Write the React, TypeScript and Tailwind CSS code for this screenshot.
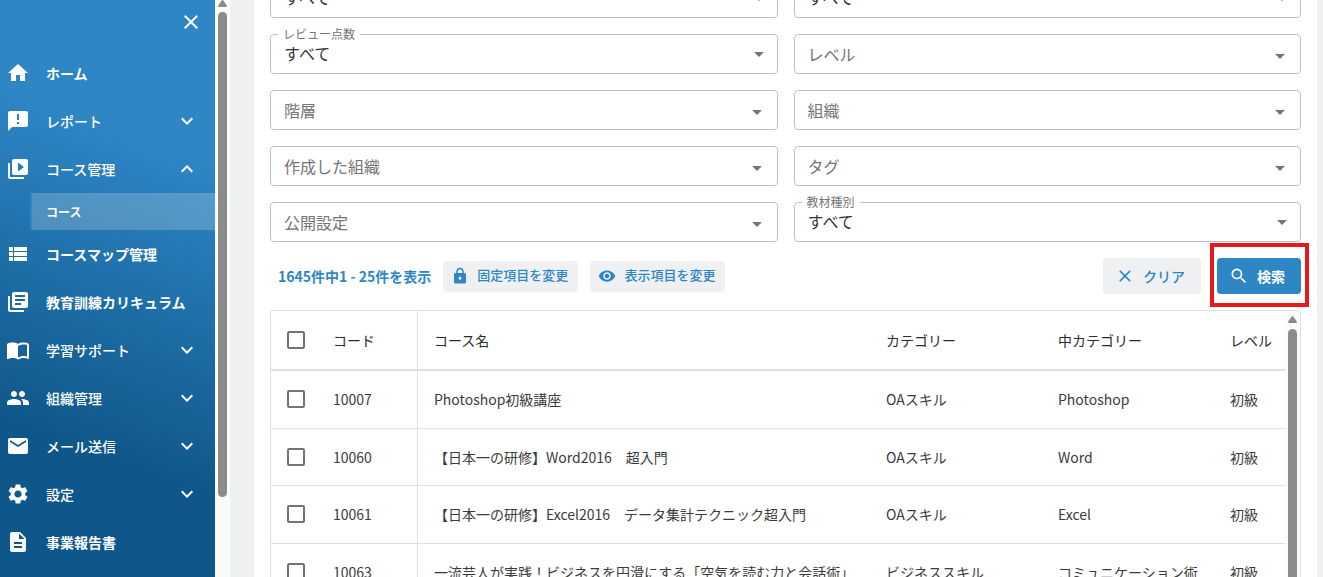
import React, { useState } from "react";
import clsx from "clsx";
import {
  MdAnnouncement,
  MdArrowDropDown,
  MdClose,
  MdDescription,
  MdEmail,
  MdExpandLess,
  MdExpandMore,
  MdHome,
  MdImportContacts,
  MdLibraryBooks,
  MdLock,
  MdPeople,
  MdSearch,
  MdSettings,
  MdVideoLibrary,
  MdViewList,
  MdVisibility,
} from "react-icons/md";

const menu = [
  { label: "ホーム", icon: MdHome },
  { label: "レポート", icon: MdAnnouncement, expandable: true },
  { label: "コース管理", icon: MdVideoLibrary, expandable: true, children: ["コース"] },
  { label: "コースマップ管理", icon: MdViewList },
  { label: "教育訓練カリキュラム", icon: MdLibraryBooks },
  { label: "学習サポート", icon: MdImportContacts, expandable: true },
  { label: "組織管理", icon: MdPeople, expandable: true },
  { label: "メール送信", icon: MdEmail, expandable: true },
  { label: "設定", icon: MdSettings, expandable: true },
  { label: "事業報告書", icon: MdDescription },
];

interface Filter {
  id: string;
  label?: string;
  value: string;
}

const filters: Filter[] = [
  { id: "category", value: "すべて" },
  { id: "subcategory", value: "すべて" },
  { id: "review", label: "レビュー点数", value: "すべて" },
  { id: "level", value: "レベル" },
  { id: "rank", value: "階層" },
  { id: "organization", value: "組織" },
  { id: "owner", value: "作成した組織" },
  { id: "tag", value: "タグ" },
  { id: "publish", value: "公開設定" },
  { id: "material", label: "教材種別", value: "すべて" },
];

const courses = [
  { code: "10007", name: "Photoshop初級講座", category: "OAスキル", sub: "Photoshop", level: "初級" },
  { code: "10060", name: "【日本一の研修】Word2016　超入門", category: "OAスキル", sub: "Word", level: "初級" },
  { code: "10061", name: "【日本一の研修】Excel2016　データ集計テクニック超入門", category: "OAスキル", sub: "Excel", level: "初級" },
  { code: "10063", name: "一流芸人が実践！ビジネスを円滑にする「空気を読む力と会話術」", category: "ビジネススキル", sub: "コミュニケーション術", level: "初級" },
];

function ScrollArrow() {
  return (
    <svg viewBox="0 0 9 7" className="w-[9px] h-[7px] shrink-0 fill-[#8b8b8b]">
      <path d="M3.7.5a1 1 0 0 1 1.6 0L8.8 5.6A.9.9 0 0 1 8 7H1A.9.9 0 0 1 .2 5.6z" />
    </svg>
  );
}

function Sidebar() {
  return (
    <nav className="w-[215px] shrink-0 overflow-hidden text-white bg-[linear-gradient(200deg,#2e86c5_25%,#0f578a_76%)]">
      <div className="flex h-[49px] items-start justify-end pt-[10px] pr-3">
        <button aria-label="メニューを閉じる">
          <MdClose className="size-6" />
        </button>
      </div>
      {menu.map(({ label, icon: Icon, expandable, children }) => (
        <div key={label}>
          <a
            href="#"
            className={clsx(
              "flex h-12 items-center pl-[6px] pr-4 text-sm",
              expandable ? "font-medium" : "font-bold"
            )}
          >
            <Icon className="mr-4 size-6 shrink-0" />
            <span className="flex-1 whitespace-nowrap">{label}</span>
            {expandable && (children ? <MdExpandLess className="size-6" /> : <MdExpandMore className="size-6" />)}
          </a>
          {children?.map((child) => (
            <a
              key={child}
              href="#"
              className="ml-[30px] flex h-[37px] items-center border-l-2 border-[#2e86c5] bg-white/20 bg-clip-padding pl-[14px] text-xs font-bold"
            >
              {child}
            </a>
          ))}
        </div>
      ))}
    </nav>
  );
}

function FilterSelect({ id, label, value }: Filter) {
  const filled = value === "すべて";

  return (
    <div className="relative h-10">
      {label && (
        <label htmlFor={id} className="absolute left-2 -top-2 bg-white px-[5px] text-xs leading-4 text-[#757575]">
          {label}
        </label>
      )}
      <select
        id={id}
        aria-label={label ? undefined : value}
        className={clsx(
          "h-full w-full appearance-none rounded border border-[#c0c0c0] bg-transparent px-[13px] text-base outline-none",
          filled ? "pb-[2px] text-[#333]" : "text-[#757575]"
        )}
      >
        <option>{value}</option>
      </select>
      <MdArrowDropDown
        className={clsx(
          "pointer-events-none absolute size-6 text-[#757575]",
          filled ? "right-[7px] top-2" : "right-[9px] top-[10px]"
        )}
      />
    </div>
  );
}

function Checkbox({ label, checked, onChange }: { label: string; checked: boolean; onChange: () => void }) {
  return (
    <input
      type="checkbox"
      aria-label={label}
      checked={checked}
      onChange={onChange}
      className="block size-[18px] appearance-none rounded-[2px] border-2 border-[#757575] checked:bg-[#2e86c5]"
    />
  );
}

export default function App() {
  const [selected, setSelected] = useState<string[]>([]);

  const toggle = (code: string) =>
    setSelected((prev) => (prev.includes(code) ? prev.filter((c) => c !== code) : [...prev, code]));

  const allSelected = selected.length === courses.length;

  return (
    <div
      lang="ja"
      className="flex h-screen overflow-hidden bg-[#eff0f2] font-['Noto_Sans_CJK_JP',sans-serif]"
    >
      <Sidebar />
      {/* Sidebar scrollbar */}
      <div className="flex w-[15px] shrink-0 flex-col items-center gap-[5px] bg-[#fbfbfb]">
        <ScrollArrow />
        <div className="h-[84%] w-[9px] rounded-full bg-[#8b8b8b]" />
      </div>

      <main className="ml-6 mr-[6px] flex min-w-0 flex-1 flex-col overflow-hidden bg-white px-4">
        {/* Search filters */}
        <div className="-mt-[22px] grid shrink-0 grid-cols-2 gap-4">
          {filters.map((filter) => (
            <FilterSelect key={filter.id} {...filter} />
          ))}
        </div>

        {/* Toolbar */}
        <div className="flex h-[68px] shrink-0 items-center text-sm text-[#2e86c5]">
          <p className="mr-3 pl-2 font-bold">1645件中1 - 25件を表示</p>
          <button className="mr-3 flex h-[31px] items-center gap-2 rounded bg-[#eff0f2] pb-px pl-2 pr-[10px] text-[13px] font-medium">
            <MdLock className="size-[18px]" />
            固定項目を変更
          </button>
          <button className="flex h-[31px] items-center gap-2 rounded bg-[#eff0f2] pb-px pl-2 pr-[10px] text-[13px] font-medium">
            <MdVisibility className="size-[18px]" />
            表示項目を変更
          </button>
          <button className="ml-auto mr-4 flex h-9 items-center gap-2 rounded bg-[#eff0f2] pl-3 pr-4 font-medium">
            <MdClose className="size-5" />
            クリア
          </button>
          <div className="relative">
            <button className="flex h-9 items-center gap-2 rounded bg-[#2e86c5] pl-3 pr-4 font-bold text-white">
              <MdSearch className="size-5" />
              検索
            </button>
            <div className="pointer-events-none absolute -left-[7px] -right-2 -top-[15px] -bottom-[13px] border-4 border-[#e61a1d]" />
          </div>
        </div>

        {/* Course list */}
        <div className="flex min-h-0 flex-1 overflow-hidden rounded-t border border-b-0 border-[#e0e0e0]">
          <div className="min-w-0 flex-1">
            <table className="w-full table-fixed border-separate border-spacing-0 whitespace-nowrap text-left text-sm text-[#3b3b3b]">
              <colgroup>
                <col className="w-[46px]" />
                <col className="w-[101px]" />
                <col />
                <col className="w-[172px]" />
                <col className="w-[172px]" />
                <col className="w-[71px]" />
              </colgroup>
              <thead>
                <tr className="h-[60px] text-[#2b2b2b] *:border-b-2 *:border-[#e0e0e0] *:font-normal">
                  <th className="pl-4">
                    <Checkbox
                      label="すべて選択"
                      checked={allSelected}
                      onChange={() => setSelected(allSelected ? [] : courses.map((c) => c.code))}
                    />
                  </th>
                  <th className="border-r pl-4">コード</th>
                  <th className="pl-4">コース名</th>
                  <th className="pl-4">カテゴリー</th>
                  <th className="pl-4">中カテゴリー</th>
                  <th className="pl-4">レベル</th>
                </tr>
              </thead>
              <tbody>
                {courses.map((course) => (
                  <tr key={course.code} className="h-[58px] even:h-[57px] *:border-b *:border-[#e0e0e0] odd:*:pb-px">
                    <td className="pl-4">
                      <Checkbox
                        label={course.name}
                        checked={selected.includes(course.code)}
                        onChange={() => toggle(course.code)}
                      />
                    </td>
                    <td className="border-r pl-4">{course.code}</td>
                    <td className="pl-4">{course.name}</td>
                    <td className="pl-4">{course.category}</td>
                    <td className="pl-4">{course.sub}</td>
                    <td className="pl-4">{course.level}</td>
                  </tr>
                ))}
              </tbody>
            </table>
          </div>
          <div className="flex w-[15px] shrink-0 flex-col items-center gap-[6px] bg-[#fbfbfb] pt-[5px]">
            <ScrollArrow />
            <div className="w-[9px] flex-1 rounded-t-full bg-[#8b8b8b]" />
          </div>
        </div>
      </main>
    </div>
  );
}
